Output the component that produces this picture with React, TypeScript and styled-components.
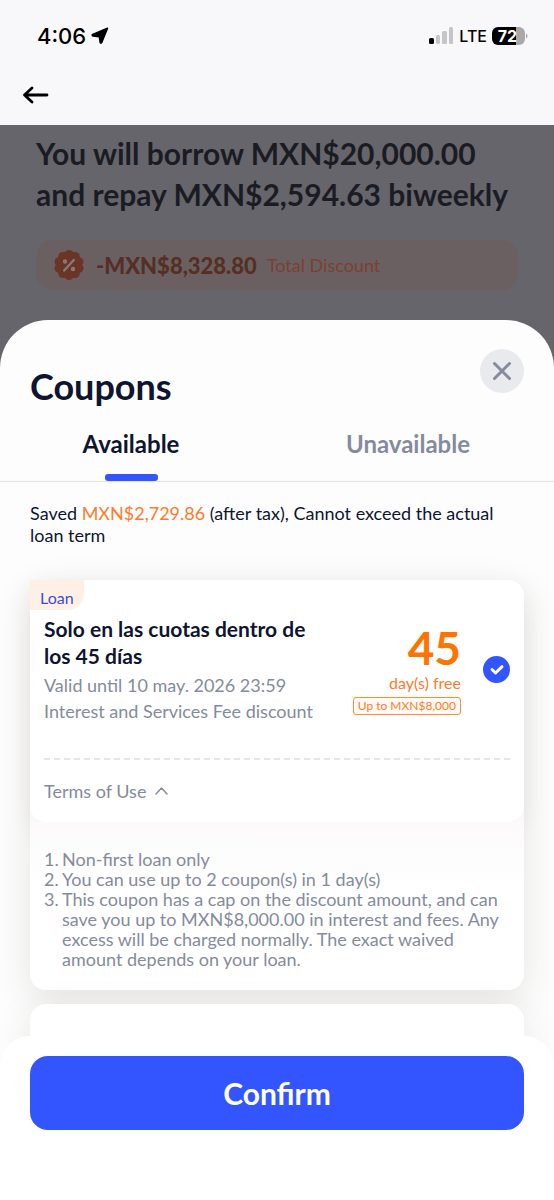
import React, { useState } from "react";
import styled, { createGlobalStyle } from "styled-components";

const GlobalStyle = createGlobalStyle`
  *, *::before, *::after { box-sizing: border-box; }
  body { margin: 0; background: #66656b; }
  h1, h2, h3, p, ol { margin: 0; padding: 0; }
  button { border: 0; padding: 0; background: none; font: inherit; color: inherit; cursor: pointer; }
`;

const Screen = styled.div`
  display: flex;
  flex-direction: column;
  min-height: 100vh;
  overflow: hidden;
  font-family: Lato, "Noto Sans", sans-serif;
  color: #0f1530;
`;

const TopArea = styled.header`
  background: #f8f8fb;
  color: #000;
`;

const StatusBar = styled.div`
  display: flex;
  align-items: center;
  justify-content: space-between;
  height: 71px;
  padding: 0 26px 0 37px;
  font-family: Inter, sans-serif;
`;

const StatusGroup = styled.div`
  display: flex;
  align-items: center;
  gap: 5px;
`;

const Clock = styled.time`
  font-size: 22px;
  font-weight: 500;
`;

const Network = styled.span`
  font-size: 16px;
  font-weight: 500;
`;

const NavBar = styled.nav`
  display: flex;
  align-items: center;
  height: 54px;
  padding: 0 20px 6px;
`;

const BackButton = styled.button`
  display: flex;
`;

const Summary = styled.section`
  padding: 8px 36px 30px;
  background: #66656b;
`;

const SummaryTitle = styled.h1`
  font-size: 30px;
  font-weight: 700;
  line-height: 41px;
  color: #1b1c23;
`;

const DiscountBar = styled.div`
  display: flex;
  align-items: center;
  height: 50px;
  margin-top: 25px;
  padding: 0 18px;
  border-radius: 16px;
  background: #6a6061;
`;

const DiscountAmount = styled.strong`
  margin: 0 10px 0 12px;
  font-size: 22px;
  font-weight: 900;
  color: #562f24;
`;

const DiscountLabel = styled.span`
  font-size: 18px;
  color: #7a4033;
`;

const Sheet = styled.main`
  display: flex;
  flex: 1;
  flex-direction: column;
  border-radius: 48px 48px 0 0;
  background: #fdfdfd;
`;

const SheetHeader = styled.div`
  display: flex;
  justify-content: space-between;
  padding: 29px 30px 0;
`;

const SheetTitle = styled.h2`
  padding-top: 12px;
  font-size: 36px;
  font-weight: 700;
  line-height: 50px;
`;

const CloseButton = styled.button`
  display: flex;
  align-items: center;
  justify-content: center;
  width: 44px;
  height: 44px;
  border-radius: 50%;
  background: #e9eaee;
`;

const Tabs = styled.div`
  display: flex;
  border-bottom: 1px solid #e1e3e6;
`;

const Tab = styled.button<{ $active: boolean }>`
  display: flex;
  flex: 1;
  flex-direction: column;
  align-items: center;
  justify-content: space-between;
  height: 70px;
  padding: 15px 15px 0 0;
  font-size: 24px;
  font-weight: 700;
  line-height: 36px;
  color: ${(p) => (p.$active ? "#0f1530" : "#858b9c")};

  &::after {
    content: "";
    width: 53px;
    height: 7px;
    border-radius: 3px;
    background: ${(p) => (p.$active ? "#3355ff" : "transparent")};
  }
`;

const Notice = styled.p`
  padding: 20px 30px 34px;
  font-size: 18px;
  line-height: 22px;
`;

const Highlight = styled.span`
  color: #ff7a2b;
`;

const CouponList = styled.div`
  display: flex;
  flex-direction: column;
  gap: 14px;
  padding: 0 30px;
`;

const Card = styled.article`
  border-radius: 16px;
  background: #fff;
  box-shadow: 0 10px 36px rgba(60, 50, 30, 0.12);
`;

const CardTop = styled.div`
  display: flex;
  flex-direction: column;
  border-radius: 0 16px 16px 16px;
  background: #fff;
  box-shadow: 0 8px 24px rgba(60, 40, 30, 0.06);
`;

const LoanTag = styled.span`
  align-self: flex-start;
  height: 30px;
  padding: 0 10px;
  border-radius: 0 0 16px 0;
  background: #fff0e6;
  font-size: 16px;
  line-height: 36px;
  color: #3a4be0;
`;

const CouponBody = styled.div`
  display: flex;
  align-items: center;
  margin: 0 14px;
  padding: 5px 0 34px;
  border-bottom: 2px dashed #e6e6e8;
`;

const CouponInfo = styled.div`
  flex: 1;
  min-width: 0;
  padding-right: 32px;
`;

const CouponTitle = styled.h3`
  margin-bottom: 3px;
  font-size: 21px;
  font-weight: 700;
  line-height: 27px;
`;

const CouponDetail = styled.p`
  font-size: 18px;
  line-height: 26px;
  color: #858b9c;
`;

const CouponValue = styled.div`
  display: flex;
  flex-direction: column;
  align-items: flex-end;
  color: #ff7a2b;
`;

const Days = styled.strong`
  font-size: 46px;
  font-weight: 700;
  line-height: 46px;
  color: #ff7300;
`;

const DaysLabel = styled.span`
  font-size: 16px;
  line-height: 24px;
`;

const Cap = styled.span`
  margin-top: 2px;
  padding: 0 4px;
  border: 1px solid #ff8a3c;
  border-radius: 3px;
  background: #fffaf3;
  font-size: 12px;
  line-height: 16px;
`;

const CheckLabel = styled.label`
  display: flex;
  margin-left: 22px;
  cursor: pointer;
`;

const CheckInput = styled.input`
  appearance: none;
  width: 27px;
  height: 27px;
  margin: 0;
  border: 2px solid #c8ccd6;
  border-radius: 50%;

  &:checked {
    display: none;
  }

  & + svg {
    display: none;
  }

  &:checked + svg {
    display: block;
  }
`;

const TermsToggle = styled.button`
  display: flex;
  align-items: center;
  gap: 9px;
  height: 62px;
  padding: 0 14px;
  font-size: 18px;
  color: #858b9c;
`;

const Terms = styled.ol`
  padding: 27px 24px 21px 14px;
  border-radius: 0 0 16px 16px;
  background: linear-gradient(#fcfafa, #fff 40%);
  font-size: 18px;
  line-height: 20px;
  color: #858b9c;
  list-style: none;
  counter-reset: term;
`;

const Term = styled.li`
  display: flex;
  counter-increment: term;

  &::before {
    content: counter(term) ".";
    flex: 0 0 18px;
  }
`;

const NextCard = styled(Card)`
  height: 62px;
`;

const Footer = styled.footer`
  position: relative;
  flex: 1;
  margin-top: -30px;
  padding: 20px 30px 70px;
  border-radius: 30px 30px 0 0;
  background: #fff;
`;

const ConfirmButton = styled.button`
  width: 100%;
  height: 74px;
  border-radius: 18px;
  background: #3355ff;
  font-size: 30px;
  font-weight: 700;
  color: #fff;
`;

const LocationIcon = () => (
  <svg width="18" height="18" viewBox="0 0 18 18" aria-hidden="true">
    <path d="M16.500 1.300 10.600 15.600c-.3.700-1.300.600-1.400-.2L8.300 9.700 1.900 8.900c-.8-.1-.9-1-.2-1.300z" fill="#000" stroke="#000" strokeWidth="1.600" strokeLinejoin="round" />
  </svg>
);

const SignalIcon = () => (
  <svg width="25" height="17" viewBox="0 0 25 17" aria-hidden="true">
    <rect x="0" y="11" width="5" height="6" rx="1.500" fill="#000" />
    <rect x="7" y="8" width="4" height="9" rx="1.500" fill="#c5c5c8" />
    <rect x="13" y="4" width="5" height="13" rx="1.500" fill="#c5c5c8" />
    <rect x="20" y="0" width="4" height="17" rx="1.500" fill="#c5c5c8" />
  </svg>
);

const BatteryIcon = () => (
  <svg width="36" height="18" viewBox="0 0 36 18" role="img" aria-label="Battery 72%">
    <path d="M6 0h18v18H6a6 6 0 0 1-6-6V6a6 6 0 0 1 6-6z" fill="#000" />
    <path d="M24 0h3a6 6 0 0 1 6 6v6a6 6 0 0 1-6 6h-3z" fill="#a9a9ac" />
    <path d="M34 6.500c2 .8 2 4.200 0 5z" fill="#a9a9ac" />
    <text x="15.500" y="14.500" textAnchor="middle" fontFamily="Inter, sans-serif" fontSize="16" fontWeight="700" fill="#fff">72</text>
  </svg>
);

const BackIcon = () => (
  <svg width="30" height="22" viewBox="0 0 30 22" fill="none" stroke="#000" strokeWidth="2.800" strokeLinecap="round" strokeLinejoin="round" aria-hidden="true">
    <path d="M27 11H4.500M12 4 4.500 11l7.500 7" />
  </svg>
);

const scallops = Array.from({ length: 10 }, (_, i) => (i * Math.PI) / 5);

const DiscountIcon = () => (
  <svg width="30" height="32" viewBox="-15 -16 30 32" aria-hidden="true">
    <g fill="#6a3526">
      <circle r="13" />
      {scallops.map((a) => (
        <circle key={a} cx={Math.sin(a) * 10.4} cy={-Math.cos(a) * 10.4} r="4.600" />
      ))}
    </g>
    <g stroke="#857a7c" strokeWidth="2.400" strokeLinecap="round" fill="none">
      <path d="M4.800-5-4.800 5.500" />
      <circle cx="-4" cy="-3.500" r="1.200" strokeWidth="2" />
      <circle cx="4" cy="4" r="1.200" strokeWidth="2" />
    </g>
  </svg>
);

const CloseIcon = () => (
  <svg width="20" height="20" viewBox="0 0 20 20" stroke="#858b9c" strokeWidth="3" strokeLinecap="round" aria-hidden="true">
    <path d="M2.500 2.500l15 15M17.500 2.500l-15 15" />
  </svg>
);

const CheckIcon = () => (
  <svg width="27" height="27" viewBox="0 0 27 27" fill="none" aria-hidden="true">
    <circle cx="13.500" cy="13.500" r="13.500" fill="#3355ff" />
    <path d="M9 13.500l3.500 3.500 6.500-6.300" stroke="#fff" strokeWidth="3" strokeLinecap="round" strokeLinejoin="round" />
  </svg>
);

const CaretIcon = () => (
  <svg width="13" height="8" viewBox="0 0 13 8" fill="none" stroke="#858b9c" strokeWidth="1.500" strokeLinecap="round" strokeLinejoin="round" aria-hidden="true">
    <path d="M1 7l5.500-6L12 7" />
  </svg>
);

const terms = [
  "Non-first loan only",
  "You can use up to 2 coupon(s) in 1 day(s)",
  "This coupon has a cap on the discount amount, and can save you up to MXN$8,000.00 in interest and fees. Any excess will be charged normally. The exact waived amount depends on your loan.",
];

export default function App() {
  const [tab, setTab] = useState("Available");
  const [open, setOpen] = useState(true);

  return (
    <Screen>
      <GlobalStyle />
      <TopArea>
        <StatusBar>
          <StatusGroup>
            <Clock>4:06</Clock>
            <LocationIcon />
          </StatusGroup>
          <StatusGroup>
            <SignalIcon />
            <Network>LTE</Network>
            <BatteryIcon />
          </StatusGroup>
        </StatusBar>
        <NavBar>
          <BackButton aria-label="Back">
            <BackIcon />
          </BackButton>
        </NavBar>
      </TopArea>
      <Summary>
        <SummaryTitle>You will borrow MXN$20,000.00 and repay MXN$2,594.63 biweekly</SummaryTitle>
        <DiscountBar>
          <DiscountIcon />
          <DiscountAmount>-MXN$8,328.80</DiscountAmount>
          <DiscountLabel>Total Discount</DiscountLabel>
        </DiscountBar>
      </Summary>
      <Sheet>
        <SheetHeader>
          <SheetTitle>Coupons</SheetTitle>
          <CloseButton aria-label="Close">
            <CloseIcon />
          </CloseButton>
        </SheetHeader>
        <Tabs role="tablist">
          {["Available", "Unavailable"].map((name) => (
            <Tab key={name} role="tab" aria-selected={tab === name} $active={tab === name} onClick={() => setTab(name)}>
              {name}
            </Tab>
          ))}
        </Tabs>
        <Notice>
          Saved <Highlight>MXN$2,729.86</Highlight> (after tax), Cannot exceed the actual loan term
        </Notice>
        <CouponList>
          <Card>
            <CardTop>
              <LoanTag>Loan</LoanTag>
              <CouponBody>
                <CouponInfo>
                  <CouponTitle>Solo en las cuotas dentro de los 45 días</CouponTitle>
                  <CouponDetail>Valid until 10 may. 2026 23:59</CouponDetail>
                  <CouponDetail>Interest and Services Fee discount</CouponDetail>
                </CouponInfo>
                <CouponValue>
                  <Days>45</Days>
                  <DaysLabel>day(s) free</DaysLabel>
                  <Cap>Up to MXN$8,000</Cap>
                </CouponValue>
                <CheckLabel>
                  <CheckInput type="checkbox" defaultChecked aria-label="Select coupon" />
                  <CheckIcon />
                </CheckLabel>
              </CouponBody>
              <TermsToggle aria-expanded={open} onClick={() => setOpen(!open)}>
                Terms of Use
                <CaretIcon />
              </TermsToggle>
            </CardTop>
            {open && (
              <Terms>
                {terms.map((term) => (
                  <Term key={term}>{term}</Term>
                ))}
              </Terms>
            )}
          </Card>
          <NextCard />
        </CouponList>
        <Footer>
          <ConfirmButton>Confirm</ConfirmButton>
        </Footer>
      </Sheet>
    </Screen>
  );
}
